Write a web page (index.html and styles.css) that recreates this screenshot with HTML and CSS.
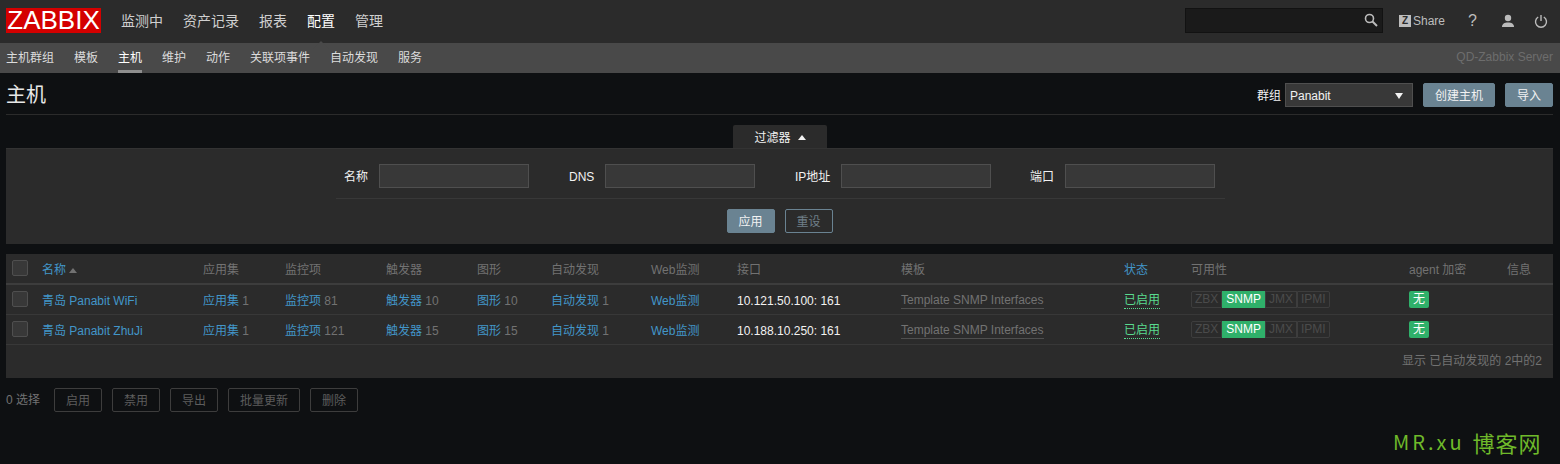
FILE: index.html
```html
<!DOCTYPE html>
<html lang="zh">
<head>
<meta charset="utf-8">
<title>主机</title>
<link rel="stylesheet" href="styles.css">
</head>
<body>
<header class="top">
  <div class="logo">ZABBIX</div>
  <nav class="main-nav">
    <a>监测中</a><a>资产记录</a><a>报表</a><a class="on">配置</a><a>管理</a>
  </nav>
  <div class="top-right">
    <div class="search">
      <svg class="search-icon" width="14" height="14" viewBox="0 0 14 14"><circle cx="5.5" cy="5.5" r="4" fill="none" stroke="#bbb" stroke-width="1.6"/><path d="M8.5 8.5L13 13" stroke="#bbb" stroke-width="2"/></svg>
    </div>
    <a class="share"><span class="share-z">Z</span>Share</a>
    <a class="help">?</a>
    <svg class="user" width="14" height="14" viewBox="0 0 14 14"><circle cx="7" cy="4" r="3.2" fill="#bbb"/><path d="M1 13c0-3 2.5-4.4 6-4.4s6 1.4 6 4.4z" fill="#bbb"/></svg>
    <svg class="power" width="14" height="14" viewBox="0 0 14 14"><path d="M4.2 3a5.5 5.5 0 1 0 5.6 0" fill="none" stroke="#bbb" stroke-width="1.4"/><path d="M7 1v6" stroke="#bbb" stroke-width="1.4"/></svg>
  </div>
</header>
<div class="sub">
  <nav class="sub-nav">
    <a>主机群组</a><a>模板</a><a class="on">主机</a><a>维护</a><a>动作</a><a>关联项事件</a><a>自动发现</a><a>服务</a>
  </nav>
  <div class="server">QD-Zabbix Server</div>
</div>
<main class="page">
  <div class="title-row">
    <h1>主机</h1>
    <div class="controls">
      <label class="lab-group">群组</label>
      <div class="select">Panabit<span class="caret"></span></div>
      <button class="btn btn-create">创建主机</button>
      <button class="btn btn-import">导入</button>
    </div>
  </div>
  <div class="tab-row"><div class="tab">过滤器<span class="tab-arrow"></span></div></div>
  <section class="filter">
    <div class="fields">
      <label class="f-l1">名称</label><div class="input"></div>
      <label class="f-l2">DNS</label><div class="input"></div>
      <label class="f-l3">IP地址</label><div class="input"></div>
      <label class="f-l4">端口</label><div class="input"></div>
    </div>
    <div class="filter-btns">
      <button class="btn btn-apply">应用</button>
      <button class="btn btn-reset">重设</button>
    </div>
  </section>
  <section class="list">
    <table>
      <colgroup>
        <col class="c0"><col class="c1"><col class="c2"><col class="c3"><col class="c4"><col class="c5"><col class="c6"><col class="c7"><col class="c8"><col class="c9"><col class="c10"><col class="c11"><col class="c12"><col class="c13">
      </colgroup>
      <thead>
        <tr>
          <th class="chk"><span class="box"></span></th>
          <th><a>名称</a><span class="sort"></span></th>
          <th>应用集</th><th>监控项</th><th>触发器</th><th>图形</th><th>自动发现</th><th>Web监测</th><th>接口</th><th>模板</th>
          <th><a>状态</a></th><th>可用性</th><th>agent 加密</th><th>信息</th>
        </tr>
      </thead>
      <tbody>
        <tr>
          <td class="chk"><span class="box"></span></td>
          <td><a>青岛 Panabit WiFi</a></td>
          <td><a>应用集</a> 1</td><td><a>监控项</a> 81</td><td><a>触发器</a> 10</td><td><a>图形</a> 10</td><td><a>自动发现</a> 1</td><td><a>Web监测</a></td>
          <td class="ip">10.121.50.100: 161</td>
          <td><span class="tpl">Template SNMP Interfaces</span></td>
          <td><span class="status">已启用</span></td>
          <td><div class="avail"><span>ZBX</span><span class="up">SNMP</span><span>JMX</span><span>IPMI</span></div></td>
          <td><span class="enc">无</span></td><td></td>
        </tr>
        <tr>
          <td class="chk"><span class="box"></span></td>
          <td><a>青岛 Panabit ZhuJi</a></td>
          <td><a>应用集</a> 1</td><td><a>监控项</a> 121</td><td><a>触发器</a> 15</td><td><a>图形</a> 15</td><td><a>自动发现</a> 1</td><td><a>Web监测</a></td>
          <td class="ip">10.188.10.250: 161</td>
          <td><span class="tpl">Template SNMP Interfaces</span></td>
          <td><span class="status">已启用</span></td>
          <td><div class="avail"><span>ZBX</span><span class="up">SNMP</span><span>JMX</span><span>IPMI</span></div></td>
          <td><span class="enc">无</span></td><td></td>
        </tr>
      </tbody>
    </table>
    <div class="paging">显示 已自动发现的 2中的2</div>
  </section>
  <div class="actions">
    <span class="count">0 选择</span>
    <button class="btn btn-act">启用</button>
    <button class="btn btn-act">禁用</button>
    <button class="btn btn-act">导出</button>
    <button class="btn btn-act">批量更新</button>
    <button class="btn btn-act">删除</button>
  </div>
</main>
<div class="mark"><span class="mark-latin">MR.xu</span><span class="mark-cjk">博客网</span></div>
</body>
</html>
```
FILE: styles.css
```css
* { box-sizing: border-box; }
html, body { margin: 0; height: 464px; overflow: hidden; }
body {
  background: #0e1012;
  color: #f2f2f2;
  font: 12px/14px "Liberation Sans", "Noto Sans CJK SC", sans-serif;
  position: relative;
}
a { color: inherit; text-decoration: none; }
button { font: inherit; cursor: pointer; }

.top { height: 43px; background: #2b2b2b; display: flex; align-items: center; padding: 0 0 2px 6px; }
.logo {
  width: 95px; height: 25px; background: #d40000; color: #fff;
  font-size: 26px; line-height: 25px; text-align: center; flex: none;
}
.main-nav { display: flex; gap: 20px; margin-left: 20px; font-size: 14px; color: #d0d0d0; }
.main-nav .on { color: #fff; position: relative; }
.main-nav .on::after {
  content: ""; position: absolute; left: 50%; margin-left: -8px; top: 27px;
  border: 8px solid transparent; border-top: 0; border-bottom-color: #494949;
}
.top-right { margin-left: auto; display: flex; align-items: center; color: #bdbdbd; padding-right: 12px; }
.search { width: 198px; height: 25px; background: #1a1a1a; border: 1px solid #121212; position: relative; }
.search-icon { position: absolute; right: 4px; top: 4px; }
.share { display: flex; align-items: center; margin-left: 16px; width: 46px; color: #bdbdbd; }
.share-z {
  width: 12px; height: 12px; background: #bdbdbd; color: #2b2b2b; font-weight: 700;
  font-size: 10px; line-height: 12px; text-align: center; margin-right: 2px;
}
.help { font-size: 16px; margin-left: 23px; width: 8px; }
.user { margin-left: 25px; }
.power { margin-left: 19px; }

.sub { height: 30px; background: #494949; display: flex; justify-content: space-between; padding: 0 7px 0 6px; }
.sub-nav { display: flex; gap: 20px; color: #dcdcdc; }
.sub-nav a { line-height: 30px; height: 30px; }
.sub-nav .on { color: #fff; border-bottom: 3px solid #8e8e8e; }
.server { line-height: 29px; color: #6d6d6d; }

.page { padding: 0 7px 0 6px; }
.title-row { height: 42px; border-bottom: 1px solid #2b2b2b; display: flex; justify-content: space-between; align-items: flex-start; padding-top: 10px; }
h1 { margin: 0; font-size: 20px; line-height: 24px; font-weight: 400; color: #e8e8e8; }
.controls { display: flex; align-items: center; }
.lab-group { margin-right: 4px; color: #f2f2f2; padding-top: 2px; }
.select {
  width: 128px; height: 24px; background: #383838; border: 1px solid #4f4f4f; color: #f2f2f2;
  line-height: 24px; padding-left: 4px; position: relative;
}
.caret {
  position: absolute; right: 9px; top: 9px; border: 4px solid transparent; border-bottom: 0; border-top: 6px solid #f2f2f2;
}
.btn { height: 24px; border-radius: 2px; padding: 2px 0 0; border: 1px solid #6a8392; background: #6a8392; color: #f2f2f2; }
.btn-create { width: 72px; margin-left: 10px; }
.btn-import { width: 48px; margin-left: 10px; }

.tab-row { display: flex; justify-content: center; padding-top: 10px; height: 33px; }
.tab {
  width: 94px; height: 23px; background: #2b2b2b; color: #f2f2f2; border-radius: 2px 2px 0 0;
  text-align: center; line-height: 27px; margin-left: 1px;
}
.tab-arrow {
  display: inline-block; margin-left: 7px; vertical-align: 2px;
  border: 4px solid transparent; border-top: 0; border-bottom: 5px solid #f2f2f2;
}

.filter { height: 96px; background: #2b2b2b; border-top: 1px solid #333; }
.fields {
  display: flex; align-items: center; height: 50px; width: 889px; margin-left: 330px;
  border-bottom: 1px solid #383838; padding-top: 15px; padding-bottom: 10px;
}
.fields label { flex: none; text-align: right; margin-right: 11px; color: #f2f2f2; white-space: nowrap; padding-top: 1px; }
.f-l1 { width: 32px; }
.f-l2 { width: 25px; margin-left: 40px; }
.f-l3 { width: 35px; margin-left: 40px; }
.f-l4 { width: 25px; margin-left: 38px; }
.input { flex: none; width: 150px; height: 24px; background: #383838; border: 1px solid #4f4f4f; }
.filter-btns { display: flex; justify-content: center; gap: 10px; padding-top: 10px; }
.btn-apply { width: 48px; }
.btn-reset { width: 48px; background: transparent; color: #6f7f88; }

.list { margin-top: 10px; height: 124px; background: #2b2b2b; }
table { width: 1547px; table-layout: fixed; border-collapse: collapse; }
.c0 { width: 36px; } .c1 { width: 161px; } .c2 { width: 82px; } .c3 { width: 101px; }
.c4 { width: 91px; } .c5 { width: 74px; } .c6 { width: 100px; } .c7 { width: 86px; }
.c8 { width: 164px; } .c9 { width: 223px; } .c10 { width: 67px; } .c11 { width: 218px; }
.c12 { width: 98px; } .c13 { width: 46px; }
th, td { text-align: left; font-weight: 400; white-space: nowrap; color: #727272; }
th { height: 30px; padding: 2px 0 0; border-bottom: 2px solid #3d3d3d; }
td { height: 30px; padding: 3px 0 0; border-bottom: 1px solid #383838; }
th a, td a { color: #4296c9; }
th.chk { padding: 0 0 1px 6px; }
td.chk { padding: 0 0 0 6px; }
.box {
  display: block; width: 16px; height: 16px; background: #383838; border: 1px solid #4f4f4f; border-radius: 2px;
}
.sort {
  display: inline-block; margin-left: 3px; vertical-align: 1px;
  border: 4px solid transparent; border-top: 0; border-bottom: 5px solid #727272;
}
td.ip { color: #f2f2f2; }
.tpl { color: #727272; border-bottom: 1px solid #4f4f4f; display: inline-block; line-height: 15px; }
.status { color: #59db8f; border-bottom: 1px dotted #59db8f; display: inline-block; line-height: 15px; }
.avail { display: inline-flex; height: 17px; vertical-align: top; margin-top: -2px; }
.avail span {
  height: 17px; line-height: 15px; padding: 0 3px; border: 1px solid #3d3d3d; color: #4b4b4b;
}
.avail span:first-child { border-radius: 2px 0 0 2px; }
.avail span:last-child { border-radius: 0 2px 2px 0; }
.avail .up { background: #2fb06a; border-color: #2fb06a; color: #fff; }
.enc {
  display: inline-block; width: 20px; height: 17px; line-height: 17px; background: #2fb06a; color: #fff;
  text-align: center; border-radius: 2px; vertical-align: top; margin-top: -2px;
}
.paging { text-align: right; color: #727272; padding: 9px 11px 0 0; }

.actions { display: flex; align-items: center; margin-top: 10px; }
.count { color: #727272; width: 48px; }
.btn-act { background: transparent; border-color: #3d3d3d; color: #5d5d5d; margin-right: 10px; width: 48px; }
.btn-act:nth-of-type(4) { width: 72px; }

.mark {
  position: absolute; left: 1393px; top: 429px; color: #6fb92a; display: flex; gap: 8px; align-items: center;
  line-height: 26px; white-space: nowrap; font-family: "Noto Sans CJK SC", sans-serif;
}
.mark-latin { font-size: 20px; letter-spacing: 3px; }
.mark-cjk { font-size: 22px; letter-spacing: 1px; }
```
